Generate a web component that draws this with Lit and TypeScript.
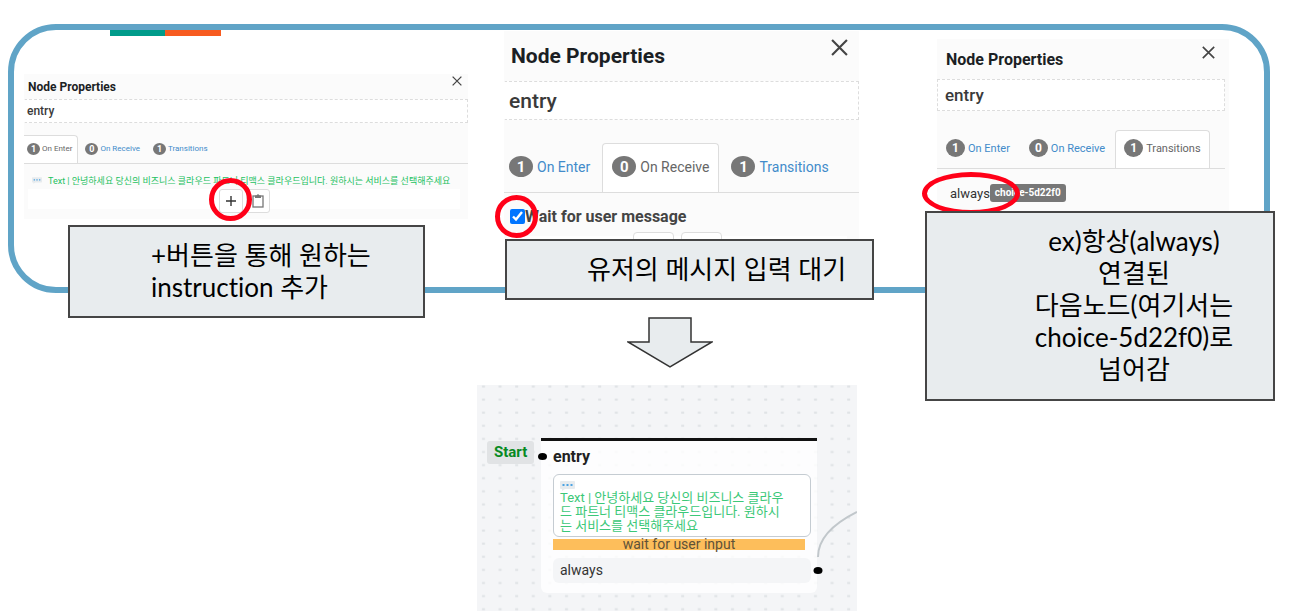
import { LitElement, html, css, svg } from "lit";
import { customElement, property } from "lit/decorators.js";

@customElement("node-panel")
class NodePanel extends LitElement {
  @property({ type: Number }) active = 0;

  static styles = css`
    :host {
      display: block;
      position: relative;
      background: #fbfbfb;
      font-family: Roboto, "Noto Sans CJK KR", sans-serif;
      color: #333;
    }
    * { box-sizing: border-box; }
    .head {
      display: flex;
      align-items: center;
      justify-content: space-between;
      height: var(--head);
      padding: 0 var(--close-pad) 0 var(--pad);
    }
    h2 { margin: 0; font-size: var(--title); font-weight: 700; color: #1b1f24; white-space: nowrap; }
    .close {
      align-self: flex-start;
      margin-top: var(--close-top);
      padding: 0;
      border: 0;
      background: none;
      color: #444;
      line-height: 0;
    }
    .close svg { width: var(--close); height: var(--close); }
    .name {
      display: block;
      width: calc(100% - var(--inset, 0px));
      height: var(--box);
      padding: 0 var(--name-pad);
      border: 1px dashed #ddd;
      border-left-color: var(--left-edge, #fff);
      background: #fff;
      font: 500 var(--entry) Roboto, sans-serif;
      color: #3a3a3a;
    }
    .tabs {
      display: flex;
      gap: var(--tab-gap);
      height: var(--tab-h);
      margin-top: var(--tab-top);
      margin-right: var(--inset, 0px);
      border-bottom: 1px solid #ddd;
      overflow: hidden;
    }
    .tab {
      display: flex;
      align-items: center;
      gap: var(--badge-gap);
      padding: 0 var(--tab-pad) var(--tab-drop, 0px);
      border: 1px solid transparent;
      border-bottom: 0;
      border-radius: 4px 4px 0 0;
      background: none;
      font: 400 var(--tab) Roboto, sans-serif;
      color: #428bca;
      white-space: nowrap;
    }
    .tab:first-child { margin-left: var(--first, 0px); }
    .tab.on { background: #fff; border-color: #ddd; color: #666; }
    .badge {
      display: grid;
      place-items: center;
      width: var(--badge-w);
      height: var(--badge-h);
      border-radius: 50%;
      background: #777;
      color: #fff;
      font-weight: 700;
      font-size: var(--badge);
    }
  `;

  render() {
    const tabs: [number, string][] = [[1, "On Enter"], [0, "On Receive"], [1, "Transitions"]];
    return html`
      <div class="head">
        <h2>Node Properties</h2>
        <button class="close" aria-label="Close">
          <svg viewBox="0 0 16 16"><path d="M1 1L15 15M15 1L1 15" stroke="currentColor" stroke-width="2" fill="none" /></svg>
        </button>
      </div>
      <input class="name" aria-label="Node name" value="entry" />
      <div class="tabs" role="tablist">
        ${tabs.map(([n, label], i) => html`
          <button class="tab ${i === this.active ? "on" : ""}" role="tab" aria-selected=${i === this.active}>
            <span class="badge">${n}</span><span>${label}</span>
          </button>`)}
      </div>
      <slot></slot>
    `;
  }
}

const bubbleIcon = svg`
  <path d="M1 0H14Q15 0 15 1V7Q15 8 14 8H5L2 10V8H1Q0 8 0 7V1Q0 0 1 0Z" fill="#e7ebee" />
  <path d="M2.500 4H4.500M6.500 4H8.500M10.500 4H12.500" stroke="#4ba3e3" stroke-width="2" />`;

const clipboardIcon = html`
  <svg class="clip" viewBox="0 0 12 14" aria-hidden="true">
    <rect x="1" y="2" width="10" height="11" fill="none" stroke="#777" stroke-width="1.300" />
    <path d="M3 4V1.500H4.500Q6 -0.800 7.500 1.500H9V4Z" fill="#777" />
  </svg>`;

@customElement("app-root")
class AppRoot extends LitElement {
  static styles = css`
    :host { display: block; background: #fff; font-family: Roboto, "Noto Sans CJK KR", sans-serif; }
    * { box-sizing: border-box; }
    .slide {
      display: grid;
      grid-template-columns: minmax(0, 444fr) minmax(0, 370fr) minmax(0, 365fr);
      column-gap: 36px;
      padding: 0 40px 0 24px;
      align-items: start;
    }
    .frame {
      grid-area: 1 / 1 / 2 / -1;
      height: 269px;
      margin: 24px 5px 0 -16px;
      border: 6px solid #60a4c7;
      border-radius: 48px;
      padding-left: 96px;
    }
    .strip { width: 111px; height: 6px; background: linear-gradient(90deg, #009b8a 50%, #f75b20 50%); }
    .col { grid-row: 1; position: relative; display: flex; flex-direction: column; }
    .one { grid-column: 1; padding-top: 74px; }
    .two { grid-column: 2; padding-top: 31px; }
    .three { grid-column: 3; padding: 39px 0 0 15px; }

    .p1 {
      --head: 25px; --pad: 4px; --title: 12px; --close: 10px; --close-top: 2px; --close-pad: 6px;
      --box: 24px; --name-pad: 2px; --entry: 12px; --tab-top: 12px; --tab-h: 29px; --tab-gap: 1px;
      --tab-pad: 5px; --first: -3px; --tab: 8px; --badge: 9px; --badge-w: 13px; --badge-h: 12px; --badge-gap: 2px;
      --tab-drop: 2px;
      height: 145px;
    }
    .p2 {
      --head: 50px; --pad: 7px; --title: 21px; --close: 17px; --close-top: 8px; --close-pad: 11px;
      --box: 39px; --name-pad: 4px; --entry: 21px; --tab-top: 23px; --tab-h: 50px; --tab-gap: 2px;
      --tab-pad: 9px; --first: -5px; --tab: 14px; --badge: 15px; --badge-w: 24px; --badge-h: 21px; --badge-gap: 4px;
      --tab-drop: 3px;
      height: 208px;
      width: 355px;
      overflow: hidden;
    }
    .p3 {
      --head: 40px; --pad: 9px; --title: 16px; --close: 13px; --close-top: 7px; --close-pad: 14px;
      --box: 32px; --name-pad: 7px; --entry: 17px; --tab-top: 19px; --tab-h: 39px; --tab-gap: 1px;
      --tab-pad: 8px; --tab: 11px; --badge: 12px; --badge-w: 19px; --badge-h: 18px; --badge-gap: 3px;
      --inset: 4px; --left-edge: #ddd; --tab-drop: 3px;
      height: 172px;
      margin: 0 46px 0 12px;
    }

    .message { display: flex; align-items: center; gap: 6px; height: 23px; padding: 10px 6px 0 8px; margin-bottom: 2px; font-size: 9px; color: #1cc161; white-space: nowrap; }
    .message svg { width: 10px; height: 7px; flex: none; }
    .tools { display: flex; justify-content: center; gap: 3px; margin: 0 6px 0 4px; height: 20px; background: #fff; }
    .message + .tools { margin-right: 8px; }
    .tool {
      display: grid;
      place-items: center;
      width: 24px;
      height: 24px;
      padding: 0;
      border: 1px solid #ddd;
      border-radius: 3px;
      background: #fff;
    }
    .tool svg { width: 12px; height: 14px; }
    .big { margin: 4px 12px 0 4px; gap: 7px; }
    .big .tool { width: 41px; height: 34px; margin-top: -4px; border-radius: 4px; }
    .big .tool svg { width: 18px; height: 21px; }
    .wait { display: flex; align-items: center; height: 31px; margin-top: 8px; padding-left: 6px; font-size: 16px; font-weight: 700; color: #444; }
    .wait input { width: 15px; height: 15px; margin: 0; }
    .link { display: flex; align-items: center; padding: 15px 0 0 13px; font-size: 13px; }
    .chip { height: 18px; padding: 0 5px; border-radius: 3px; background: #777; color: #fff; font-size: 10px; line-height: 18px; font-weight: 700; }

    .ring { position: absolute; border: 5px solid #ff0018; border-radius: 50%; }
    .r1 { width: 43px; height: 43px; left: 185px; top: 104px; }
    .r2 { width: 43px; height: 43px; left: -9px; top: 195px; }
    .r3 { width: 98px; height: 43px; left: -15px; top: 133px; }

    .callout {
      position: relative;
      margin: 0;
      border: 2px solid #454545;
      background: #e8ecee;
      color: #000;
      font-family: Lato, "Noto Sans CJK KR", sans-serif;
      font-variant-ligatures: none;
      font-size: 26px;
      line-height: 32px;
    }
    .c1 { margin: 6px 43px 0 44px; padding: 12px 0 13px 81px; }
    .c2 { padding: 12px 0 13px 80px; margin-left: 1px; white-space: nowrap; }
    .c3 { padding: 12px 0 14px 68px; text-align: center; }

    .flow { display: flex; flex-direction: column; align-items: center; width: 380px; margin: 17px 0 0 -27px; }
    .arrow { width: 86px; height: 51px; margin-left: 6px; }
    .canvas { position: relative; width: 380px; height: 226px; margin-top: 17px; background: #f4f5f7; overflow: hidden; }
    .layer { position: absolute; inset: 0; width: 100%; height: 100%; }
    .start { position: absolute; left: 10px; top: 56px; height: 23px; padding: 0 7px; border-radius: 3px; background: #e1e3e5; color: #078a22; font-size: 15px; line-height: 23px; font-weight: 700; }
    .node { position: absolute; left: 64px; top: 53px; width: 276px; height: 155px; padding: 0 6px 0 12px; border-top: 3px solid #111; border-radius: 0 0 6px 6px; background: rgba(255, 255, 255, 0.8); }
    .node h3 { margin: 0; height: 33px; font-size: 16px; line-height: 31px; color: #222; }
    .bubble { height: 63px; padding: 6px 6px 0; border: 1px solid #c5ccd2; border-radius: 6px; background: #fff; font-size: 13px; line-height: 14px; color: #3cc878; white-space: nowrap; }
    .bubble svg { display: block; width: 15px; height: 10px; }
    .bubble p { margin: 0; }
    .input { margin: 2px 6px 8px 0; height: 11px; background: #fdbe5b; color: #5f5238; text-align: center; font-size: 14px; line-height: 11px; }
    .always { height: 25px; padding-left: 7px; border-radius: 6px; background: #f4f5f7; font-size: 14px; line-height: 25px; color: #333; }
  `;

  render() {
    return html`
      <main class="slide">
        <div class="frame"><div class="strip"></div></div>

        <section class="col one">
          <node-panel class="p1" .active=${0}>
            <div class="message">
              <svg viewBox="0 0 15 10" aria-hidden="true">${bubbleIcon}</svg>
              <span>Text | 안녕하세요 당신의 비즈니스 클라우드 파트너 티맥스 클라우드입니다. 원하시는 서비스를 선택해주세요</span>
            </div>
            <div class="tools">
              <button class="tool" aria-label="Add instruction"><svg viewBox="0 0 12 14"><path d="M6 2V12M1 7H11" stroke="#333" stroke-width="1.400" /></svg></button>
              <button class="tool" aria-label="Paste">${clipboardIcon}</button>
            </div>
            <span class="ring r1"></span>
          </node-panel>
          <p class="callout c1">+버튼을 통해 원하는<br />instruction 추가</p>
        </section>

        <section class="col two">
          <node-panel class="p2" .active=${1}>
            <label class="wait"><input type="checkbox" checked />Wait for user message</label>
            <div class="tools big">
              <button class="tool" aria-label="Add"></button>
              <button class="tool" aria-label="Paste">${clipboardIcon}</button>
            </div>
          </node-panel>
          <span class="ring r2"></span>
          <p class="callout c2">유저의 메시지 입력 대기</p>
          <div class="flow">
            <svg class="arrow" viewBox="0 0 86 51" aria-hidden="true">
              <path d="M22 1H64V25H85L43 50L1 25H22Z" fill="#e8ecee" stroke="#333" stroke-width="1.500" />
            </svg>
            <div class="canvas">
              <svg class="layer" aria-hidden="true">
                <defs><pattern id="dots" width="16.600" height="13.100" patternUnits="userSpaceOnUse">
                  <rect x="5" y="0.500" width="3" height="2" fill="#dfe2e5" />
                </pattern></defs>
                <rect width="100%" height="100%" fill="url(#dots)" />
              </svg>
              <div class="start">Start</div>
              <div class="node">
                <h3>entry</h3>
                <div class="bubble">
                  <svg viewBox="0 0 15 10" aria-hidden="true">${bubbleIcon}</svg>
                  <p>Text | 안녕하세요 당신의 비즈니스 클라우<br />드 파트너 티맥스 클라우드입니다. 원하시<br />는 서비스를 선택해주세요</p>
                </div>
                <div class="input">wait for user input</div>
                <div class="always">always</div>
              </div>
              <svg class="layer" aria-hidden="true">
                <path d="M341 172C341 153 358 138 380 127" fill="none" stroke="#c1c7cb" stroke-width="2" />
                <ellipse cx="65.500" cy="71.500" rx="4.500" ry="3.500" />
                <ellipse cx="341" cy="185.500" rx="4.500" ry="3.500" />
              </svg>
            </div>
          </div>
        </section>

        <section class="col three">
          <node-panel class="p3" .active=${2}>
            <div class="link"><span>always</span><span class="chip">choice-5d22f0</span></div>
            <span class="ring r3"></span>
          </node-panel>
          <p class="callout c3">ex)항상(always)<br />연결된<br />다음노드(여기서는<br />choice-5d22f0)로<br />넘어감</p>
        </section>
      </main>
    `;
  }
}
